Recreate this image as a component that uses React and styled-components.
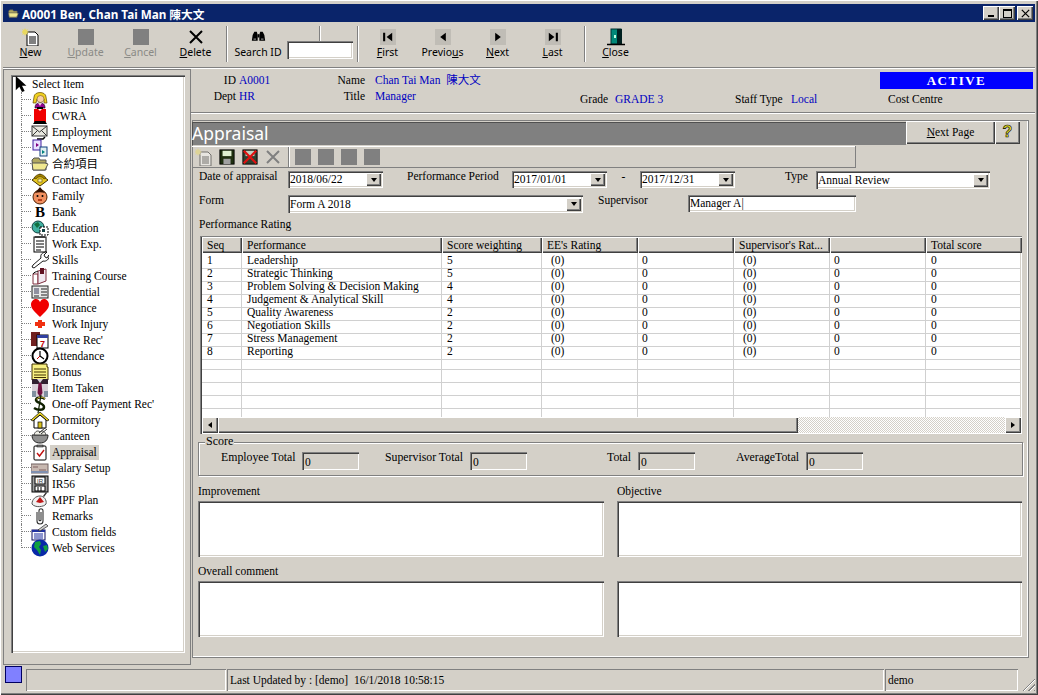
import React from "react"
import styled, { createGlobalStyle, css } from "styled-components"

const FACE = "#d4d0c8"

const GlobalStyle = createGlobalStyle`
  html, body { margin: 0; padding: 0; background: ${FACE}; }
  * { box-sizing: border-box; }
`

const raised = css`
  box-shadow: inset 1px 1px 0 #fff, inset -1px -1px 0 #404040, inset -2px -2px 0 #808080;
`
const sunken = css`
  box-shadow: inset 1px 1px 0 #808080, inset 2px 2px 0 #404040, inset -1px -1px 0 #fff, inset -2px -2px 0 ${FACE};
`
const etched = css`
  box-shadow: inset 1px 1px 0 #808080, inset -1px -1px 0 #808080, inset 2px 2px 0 #fff, 1px 1px 0 #fff;
`

const Icons = {
  pointer: <path d="M2 0v16l4-4 3 6 3-1-3-6h5z" fill="#000" />,
  person: <>
    <path d="M3 6c0-6 12-6 12 0l1 6h-3V8H6l-1 4H2z" fill="#f0d020" stroke="#604800" strokeWidth=".7" />
    <circle cx="9.500" cy="8" r="3.500" fill="#f8d0a8" stroke="#604800" strokeWidth=".5" />
    <path d="M4 17c0-4 2-5 5-5s5 1 5 5z" fill="#900090" stroke="#000" strokeWidth=".6" />
    <path d="M7 12h4l-2 3z" fill="#f0c8e0" />
  </>,
  coat: <>
    <path d="M3 2h4l2 2 2-2h4v13H3z" fill="#f00000" />
    <path d="M2 17l2-3h10l2 3z" fill="#000" />
    <rect x="6" y="0" width="6" height="2" fill="#000" />
  </>,
  mail: <>
    <rect x="1" y="3" width="15" height="10" fill="#e8e8e0" stroke="#333" />
    <path d="M1 3l7.500 6L16 3M1 13l5-5M16 13l-5-5" fill="none" stroke="#333" />
    <path d="M6 16h6l2-2" fill="none" stroke="#000" strokeWidth="1.500" />
  </>,
  movement: <>
    <rect x="2" y="1" width="8" height="10" fill="#e8e0ff" stroke="#4020a0" />
    <rect x="9" y="8" width="7" height="9" fill="#e0f0f0" stroke="#104080" />
    <path d="M5 4l3 2-3 2z" fill="#800080" />
    <path d="M11 11l3 2-3 2z" fill="#008080" />
  </>,
  folder: <>
    <path d="M1 5l2-2h5l1 2h6v10H2z" fill="#b0a860" stroke="#555" />
    <path d="M1 8h13l3 1-3 6H2z" fill="#f0e890" stroke="#555" />
  </>,
  phone: <>
    <path d="M1 9l8-6 8 6-8 6z" fill="#e8c820" stroke="#403000" />
    <path d="M3 7c3-5 9-5 12 0l-2 1c-2-3-6-3-8 0z" fill="#a08000" stroke="#403000" strokeWidth=".6" />
    <rect x="7" y="8" width="4" height="3" fill="#fff0a0" stroke="#403000" strokeWidth=".5" />
  </>,
  face: <>
    <circle cx="9" cy="10" r="7" fill="#f09060" stroke="#502000" />
    <path d="M4 6l5-6 5 6c-3-1-7-1-10 0z" fill="#301000" />
    <circle cx="6.500" cy="9" r="1" fill="#000" /><circle cx="11.500" cy="9" r="1" fill="#000" />
    <path d="M7 13h4" stroke="#a02000" strokeWidth="1.500" />
  </>,
  bank: <text x="9" y="14" textAnchor="middle" fontFamily="Liberation Serif, serif" fontWeight="700" fontSize="15" fill="#000">B</text>,
  education: <>
    <circle cx="7" cy="8" r="6" fill="#40b0a0" stroke="#104040" />
    <path d="M3 5l4-2 2 3-3 3zM9 10l3 1-2 3z" fill="#107040" />
    <rect x="9" y="8" width="8" height="8" fill="#fff" stroke="#000" strokeDasharray="2 1" />
    <rect x="11" y="10" width="3" height="3" fill="#104040" />
  </>,
  notepad: <>
    <rect x="3" y="2" width="12" height="15" fill="#fff" stroke="#000" />
    <path d="M5 1v2M7 1v2M9 1v2M11 1v2M13 1v2" stroke="#000" />
    <path d="M5 6h8M5 9h8M5 12h8M5 15h5" stroke="#000" />
  </>,
  wrench: <path d="M1 16l1-2 8-7c-1-3 1-6 6-6l-3 3 1 2 2 1 2-3c1 4-3 7-6 6l-9 7z" fill="#fff" stroke="#000" strokeWidth=".9" />,
  training: <>
    <path d="M2 7h5v10H2z" fill="#fff" stroke="#803040" />
    <path d="M7 4l8-2v12l-8 3z" fill="#f0e8f0" stroke="#803040" />
    <rect x="9" y="1" width="4" height="6" fill="#601020" />
    <path d="M2 7c1-2 3-2 5-3" fill="none" stroke="#000" />
  </>,
  card: <>
    <rect x="1" y="3" width="16" height="12" fill="#e8e8e8" stroke="#222" />
    <rect x="3" y="5" width="5" height="6" fill="#9090a0" />
    <path d="M10 6h6M10 9h6M10 12h6M3 13h5" stroke="#222" />
  </>,
  heart: <path d="M9 18C4 13 0 10 0 5.500 0 2 3 0 5 0c2 0 3 1 4 3 1-2 2-3 4-3 2 0 5 2 5 5.500C18 10 14 13 9 18z" fill="#f00000" />,
  cross: <path d="M7 5h4v2h3v4h-3v2H7v-2H4V7h3z" fill="#f03010" />,
  calendar: <>
    <rect x="0" y="1" width="9" height="14" fill="#702020" />
    <rect x="6" y="4" width="11" height="13" fill="#fff" stroke="#000" />
    <rect x="6" y="4" width="11" height="3" fill="#3040a0" />
    <text x="11.500" y="16" textAnchor="middle" fontFamily="Liberation Sans, sans-serif" fontWeight="700" fontSize="9" fill="#c00000">7</text>
  </>,
  clock: <>
    <circle cx="9" cy="9" r="7.500" fill="#fff" stroke="#000" strokeWidth="2" />
    <path d="M9 9V4M9 9l4 3" stroke="#000" strokeWidth="1.200" />
    <path d="M9 9l-3 3" stroke="#c00000" />
  </>,
  bonus: <>
    <path d="M1 1h15v3h1v13H1z" fill="#f8f080" stroke="#403000" />
    <path d="M3 6h12M3 9h12M3 12h12M3 14.500h12" stroke="#403000" />
  </>,
  tie: <>
    <rect x="1" y="0" width="16" height="18" fill="#d8d0d8" />
    <path d="M1 0h5l3 4 3-4h5v5H1z" fill="#302030" />
    <path d="M7.500 4h3l1 10-2.500 4-2.500-4z" fill="#701040" />
    <rect x="1" y="12" width="4" height="6" fill="#8090a0" /><rect x="13" y="12" width="4" height="6" fill="#8090a0" />
  </>,
  dollar: <>
    <path d="M14 4c-3-2-9-2-9 1s8 3 8 7-7 3-10 1" fill="none" stroke="#102000" strokeWidth="2.500" />
    <path d="M14 3.500c-3-2-8-1.500-8 1" fill="none" stroke="#e0c040" strokeWidth="1" />
    <path d="M10 0l-3 18" stroke="#102000" strokeWidth="1.200" />
  </>,
  house: <>
    <path d="M0 9l9-8 9 8-2 1-7-6-7 6z" fill="#f0d820" stroke="#000" strokeWidth=".7" />
    <path d="M3 9v8h12V9L9 4z" fill="#fff" stroke="#000" />
    <rect x="7" y="11" width="4" height="6" fill="#d8c020" stroke="#000" strokeWidth=".7" />
  </>,
  bowl: <>
    <path d="M1 8h16c0 5-3 8-8 8s-8-3-8-8z" fill="#909090" stroke="#222" />
    <path d="M3 8c1-4 4-5 6-3 2-2 5-1 6 3z" fill="#f0f0e8" stroke="#444" />
    <path d="M8 6l6-5M10 7l6-5" stroke="#333" />
  </>,
  check: <>
    <rect x="3" y="3" width="12" height="14" rx="1" fill="#fff" stroke="#000" />
    <rect x="6" y="2" width="6" height="2" fill="#808080" stroke="#000" strokeWidth=".5" />
    <path d="M6 10l2.500 3L13 7" fill="none" stroke="#c01010" strokeWidth="1.400" />
  </>,
  salary: <>
    <rect x="0" y="5" width="17" height="9" fill="#c8b8b0" stroke="#706060" />
    <path d="M2 8h5M8 11h7" stroke="#806060" />
    <rect x="0" y="12" width="17" height="2" fill="#8090b0" />
  </>,
  floppy: <>
    <rect x="1" y="1" width="16" height="16" fill="#a0a0a0" stroke="#000" />
    <rect x="4" y="2" width="10" height="7" fill="#fff" stroke="#000" />
    <text x="9" y="8" textAnchor="middle" fontFamily="Liberation Sans, sans-serif" fontSize="6" fill="#333">IR</text>
    <rect x="4" y="11" width="10" height="5" fill="#fff" stroke="#000" />
    <path d="M7 12v4M10 12v4" stroke="#000" />
  </>,
  mpf: <>
    <path d="M1 13c0-5 4-8 8-8s7 4 6 8c-2 3-11 4-14 0z" fill="#f0f0f0" stroke="#555" />
    <path d="M5 11l4-5 4 5-4 1z" fill="#c01818" />
    <path d="M12 5l3-4 1 1-3 4z" fill="#333" />
  </>,
  clip: <path d="M6 5v9c0 4 6 4 6 0V4c0-3-4-3-4 0v9c0 1 2 1 2 0V5" fill="none" stroke="#333" strokeWidth="1.100" />,
  fields: <>
    <rect x="1" y="7" width="13" height="10" fill="#f8f8ff" stroke="#101060" />
    <rect x="1" y="7" width="13" height="2" fill="#2030a0" />
    <path d="M3 11h9M3 13h9M3 15h9" stroke="#2030a0" />
    <path d="M7 7l8-6 2 2-8 5z" fill="#d0d0d0" stroke="#222" strokeWidth=".7" />
  </>,
  globe: <>
    <circle cx="9" cy="9" r="8.500" fill="#0828a8" />
    <path d="M4 3l5-1 1 3-2 3 2 3-1 5-3-5-3-3zM12 7l4-1 1 4-3 3z" fill="#10a040" />
  </>,
  newDoc: <>
    <path d="M5 4h8l3 3v11H5z" fill="#fff" stroke="#000" />
    <path d="M7 9h7M7 11h7M7 13h7M7 15h7" stroke="#000" />
    <path d="M3 0l1 2 2-1-1 2 2 1-2 1 1 2-2-1-1 2-1-2-2 1 1-2-2-1 2-1-1-2 2 1z" fill="#e8d860" />
  </>,
  binoculars: <>
    <path d="M2 6l2-4h3l1 4v7H1zM16 6l-2-4h-3l-1 4v7h7z" fill="#000" />
    <rect x="8" y="5" width="2" height="4" fill="#000" />
    <rect x="3" y="10" width="3" height="2" fill="#606060" /><rect x="12" y="10" width="3" height="2" fill="#606060" />
  </>,
  door: <>
    <rect x="4" y="1" width="10" height="15" fill="#008878" stroke="#003030" />
    <rect x="10" y="1" width="5" height="15" fill="#002020" />
    <rect x="7" y="7" width="2" height="3" fill="#c0ffe0" />
    <path d="M0 16.500h18" stroke="#000" strokeWidth="1.500" />
  </>,
  save: <>
    <rect x="1" y="1" width="16" height="16" fill="#203010" stroke="#000" />
    <rect x="4" y="2" width="10" height="6" fill="#e0f0d0" />
    <rect x="5" y="11" width="8" height="6" fill="#a0a0a0" />
  </>,
  saveDelete: <>
    <rect x="1" y="1" width="16" height="16" fill="#304030" stroke="#000" />
    <rect x="4" y="2" width="10" height="6" fill="#c0d0c0" />
    <path d="M2 2l14 14M16 2L2 16" stroke="#e01010" strokeWidth="2.500" />
  </>,
}

function Icon({ name, size = 18, faded }) {
  return (
    <svg width={size} height={size} viewBox="0 0 18 18" opacity={faded ? 0.45 : 1} style={{ display: "block" }}>
      {Icons[name]}
    </svg>
  )
}

const XMark = ({ color = "#000", size = 18 }) => (
  <svg width={size} height={size} viewBox="0 0 18 18" style={{ display: "block" }}>
    <path d="M3 3l12 12M15 3L3 15" stroke={color} strokeWidth="2" />
  </svg>
)

const Triangle = ({ dir, size = 8 }) => {
  const d = {
    left: "M6 1L2 4l4 3z",
    right: "M2 1l4 3-4 3z",
    down: "M1 2h6L4 6z",
    first: "M.5 1H2v6H.5zM7 1L3 4l4 3z",
    last: "M1 1l4 3-4 3zM6 1h1.500v6H6z",
  }[dir]
  return <svg width={size} height={size} viewBox="0 0 8 8" style={{ display: "block" }}><path d={d} fill="#000" /></svg>
}

const Window = styled.div`
  width: 1038px;
  height: 695px;
  padding: 4px 3px 3px;
  background: ${FACE};
  overflow: hidden;
  display: flex;
  flex-direction: column;
  font-family: "Liberation Serif", "Noto Sans CJK TC", serif;
  font-size: 11.5px;
  color: #000;
  box-shadow: inset 1px 1px 0 #fff, inset -1px -1px 0 #404040, inset -2px -2px 0 #808080;
`
const TitleBar = styled.div`
  height: 18px;
  flex: none;
  background: #0a246a;
  color: #fff;
  display: flex;
  align-items: center;
  padding: 0 2px 0 5px;
  font: 700 11.7px "Noto Sans", "Noto Sans CJK TC", sans-serif;
`
const TitleText = styled.span`
  flex: 1;
  margin-left: 3px;
`
const WinButton = styled.div`
  width: 16px;
  height: 14px;
  margin-left: ${p => p.$gap || 0}px;
  background: ${FACE};
  ${raised};
  display: flex;
  align-items: center;
  justify-content: center;
`
const MinGlyph = styled.i`
  width: 6px;
  height: 2px;
  background: #000;
  margin-top: 6px;
`
const MaxGlyph = styled.i`
  width: 9px;
  height: 9px;
  border: 1px solid #000;
  border-top-width: 2px;
`
const ToolBar = styled.div`
  height: 46px;
  flex: none;
  display: flex;
  border-bottom: 1px solid #808080;
  box-shadow: 0 1px 0 #fff;
`
const ToolButton = styled.div`
  width: ${p => p.$w || 55}px;
  flex: none;
  padding-top: 5px;
  display: flex;
  flex-direction: column;
  align-items: center;
  font: 10.5px "Noto Sans", sans-serif;
  color: ${p => (p.$off ? "#8a8a86" : "#000")};
  u { text-decoration: underline; }
`
const ToolIcon = styled.div`
  height: 20px;
  display: flex;
  align-items: center;
  justify-content: center;
`
const ToolLabel = styled.div`
  margin-top: -2px;
  line-height: 15px;
`
const GreySquare = styled.div`
  width: 16px;
  height: 16px;
  background: #808080;
`
const NavSquare = styled.div`
  width: 16px;
  height: 16px;
  background: #c0bdb6;
  display: flex;
  align-items: center;
  justify-content: center;
  svg { transform: scale(1.4); }
`
const ToolSep = styled.div`
  width: 2px;
  height: 36px;
  flex: none;
  margin: 4px ${p => p.$r || 0}px 0 ${p => p.$l || 0}px;
  border-left: 1px solid #808080;
  border-right: 1px solid #fff;
`
const SearchBox = styled.div`
  display: flex;
  flex: none;
  width: 124px;
  position: relative;
`
const SearchTick = styled.div`
  position: absolute;
  left: 90px;
  top: 4px;
  height: 15px;
  width: 2px;
  border-left: 1px solid #808080;
  border-right: 1px solid #fff;
`
const SearchField = styled.div`
  width: 66px;
  height: 18px;
  margin-top: 19px;
  flex: none;
  background: #fff;
  ${sunken};
`
const Main = styled.div`
  flex: 1;
  display: flex;
  padding-top: 1px;
  min-height: 0;
`
const LeftPanel = styled.div`
  width: 188px;
  height: 596px;
  flex: none;
  padding: 6px 6px 0 8px;
  box-shadow: inset -1px -1px 0 #808080, inset 1px 1px 0 #808080;
`
const Tree = styled.div`
  height: 578px;
  background: #fff;
  ${sunken};
  padding: 2px 0 0 3px;
`
const RootRow = styled.div`
  height: 16px;
  display: flex;
  align-items: center;
  margin-top: -1px;
`
const RootLabel = styled.span`
  margin-left: 2px;
`
const TreeRow = styled.div`
  height: 16px;
  display: flex;
  align-items: center;
  padding-left: 7px;
`
const Connector = styled.div`
  width: 10px;
  height: ${p => (p.$last ? 8 : 16)}px;
  flex: none;
  align-self: flex-start;
  border-left: 1px dotted #808080;
  position: relative;
  &::after {
    content: "";
    position: absolute;
    left: 0;
    top: 7px;
    width: 9px;
    border-top: 1px dotted #808080;
  }
`
const TreeIcon = styled.div`
  width: 18px;
  flex: none;
`
const TreeLabel = styled.span`
  margin-left: ${p => (p.$selected ? 1 : 3)}px;
  padding: 0 ${p => (p.$selected ? 2 : 0)}px;
  line-height: 15px;
  background: ${p => (p.$selected ? FACE : "transparent")};
  white-space: nowrap;
`
const RightSide = styled.div`
  flex: 1;
  min-width: 0;
`
const Header = styled.div`
  height: 44px;
  display: flex;
  padding-top: 3px;
  border-bottom: 1px solid #808080;
  box-shadow: 0 1px 0 #fff;
  margin-bottom: 7px;
`
const InfoCol = styled.div`
  width: ${p => p.$w}px;
  flex: none;
  padding-top: ${p => p.$top || 0}px;
`
const InfoRow = styled.div`
  display: flex;
  height: 16px;
  line-height: 16px;
`
const InfoLabel = styled.span`
  width: ${p => p.$w}px;
  flex: none;
  text-align: ${p => p.$align || "right"};
  margin-right: ${p => p.$gap ?? 3}px;
`
const InfoValue = styled.span`
  color: #0000c0;
  white-space: nowrap;
`
const ActiveBadge = styled.div`
  width: 153px;
  height: 17px;
  background: #0000ff;
  color: #fff;
  font-weight: 700;
  font-size: 13px;
  letter-spacing: 1.5px;
  text-align: center;
  line-height: 17px;
`
const CostCentre = styled.div`
  padding: 2px 0 0 8px;
  line-height: 16px;
`
const Panel = styled.div`
  width: 837px;
  height: 538px;
  margin-left: 1px;
  padding-top: 2px;
  box-shadow: inset 1px 1px 0 #808080, inset -1px -1px 0 #808080, inset -2px -2px 0 #fff;
`
const PanelHead = styled.div`
  display: flex;
  height: 23px;
`
const PanelTitle = styled.div`
  width: 714px;
  background: #808080;
  color: #fff;
  font: 17.5px/22px "Noto Sans", sans-serif;
  box-shadow: inset 1px 1px 0 #505050;
`
const HeadButton = styled.div`
  width: ${p => p.$w}px;
  height: 23px;
  margin-top: -1px;
  padding-bottom: 1px;
  background: ${FACE};
  ${raised};
  display: flex;
  align-items: center;
  justify-content: center;
  u { text-decoration: underline; }
`
const HelpMark = styled.span`
  font: 700 16px "Liberation Sans", sans-serif;
  color: #e8e020;
  -webkit-text-stroke: .6px #000;
`
const FormBar = styled.div`
  width: 664px;
  height: 22px;
  margin-top: 1px;
  display: flex;
  align-items: center;
  box-shadow: inset -1px -1px 0 #808080, inset 0 1px 0 #fff;
`
const BarSlot = styled.div`
  width: 23px;
  display: flex;
  justify-content: center;
`
const BarSep = styled.div`
  width: 2px;
  height: 20px;
  margin: 0 5px 0 4px;
  border-left: 1px solid #808080;
  border-right: 1px solid #fff;
`
const SquareRow = styled.div`
  display: flex;
  gap: 7px;
`
const FormRow = styled.div`
  display: flex;
  align-items: flex-start;
  height: ${p => p.$h}px;
  padding-left: 7px;
`
const FieldLabel = styled.div`
  width: ${p => p.$w}px;
  margin-left: ${p => p.$ml || 0}px;
  flex: none;
  line-height: 16px;
  white-space: nowrap;
  text-align: ${p => p.$align || "left"};
`
const Combo = styled.div`
  width: ${p => p.$w}px;
  height: ${p => p.$h || 17}px;
  margin-top: 3px;
  flex: none;
  background: #fff;
  ${sunken};
  display: flex;
  align-items: center;
  justify-content: space-between;
  padding: 1px 2px 2px 2px;
  line-height: 14px;
`
const ComboArrow = styled.div`
  width: 15px;
  height: 13px;
  margin-top: 1px;
  background: ${FACE};
  ${raised};
  display: flex;
  align-items: center;
  justify-content: center;
`
const Grid = styled.div`
  width: 822px;
  height: 198px;
  margin-left: 8px;
  background: #fff;
  ${sunken};
  padding: 1px 1px 1px 2px;
  display: flex;
  flex-direction: column;
`
const GridBody = styled.div`
  flex: 1;
  min-height: 0;
  overflow: hidden;
`
const GridRow = styled.div`
  display: grid;
  grid-template-columns: 40px 200px 100px 96px 96px 96px 96px 96px;
  height: ${p => (p.$head ? 16 : 13)}px;
`
const HeadCell = styled.div`
  background: ${FACE};
  ${raised};
  padding-left: 5px;
  line-height: 17px;
  white-space: nowrap;
  overflow: hidden;
`
const Cell = styled.div`
  border-right: 1px solid #d0d0d0;
  border-bottom: 1px solid #d0d0d0;
  padding-left: ${p => p.$pad || 5}px;
  line-height: 15px;
  white-space: nowrap;
`
const HScroll = styled.div`
  height: 16px;
  flex: none;
  display: flex;
`
const ScrollBtn = styled.div`
  width: 16px;
  flex: none;
  background: ${FACE};
  ${raised};
  display: flex;
  align-items: center;
  justify-content: center;
`
const ScrollThumb = styled.div`
  width: 580px;
  flex: none;
  background: ${FACE};
  ${raised};
`
const ScrollTrack = styled.div`
  flex: 1;
  background: repeating-conic-gradient(#d4d0c8 0 25%, #fff 0 50%) 0 0 / 2px 2px;
`
const ScoreGroup = styled.div`
  width: 825px;
  height: 34px;
  margin: 8px 0 0 6px;
  display: flex;
  align-items: flex-start;
  position: relative;
  ${etched};
`
const ScoreLegend = styled.span`
  position: absolute;
  left: 7px;
  top: -7px;
  padding: 0 1px;
  line-height: 13px;
  font-size: 12px;
  background: ${FACE};
`
const ScoreLabel = styled.div`
  margin-left: ${p => p.$ml}px;
  width: ${p => p.$w}px;
  flex: none;
  padding-top: 7px;
  line-height: 16px;
  font-size: 11.8px;
  white-space: nowrap;
`
const ReadOnly = styled.div`
  width: 57px;
  height: 18px;
  margin-top: 10px;
  flex: none;
  ${sunken};
  padding: 3px 0 0 3px;
  line-height: 14px;
`
const NotesRow = styled.div`
  display: flex;
  gap: 13px;
  margin: ${p => p.$mt}px 0 0 6px;
`
const NotesCol = styled.div`
  width: ${p => p.$w}px;
`
const NotesLabel = styled.div`
  height: 17px;
  line-height: 14px;
`
const NotesBox = styled.div`
  height: 56px;
  background: #fff;
  ${sunken};
`
const StatusBar = styled.div`
  height: 26px;
  flex: none;
  display: flex;
  align-items: flex-start;
  padding-left: 2px;
`
const StatusLight = styled.div`
  width: 17px;
  height: 17px;
  background: #8080ff;
  border: 1px solid #000060;
  flex: none;
  margin-right: 4px;
`
const StatusPane = styled.div`
  width: ${p => p.$w}px;
  height: 22px;
  margin: 3px 1px 0 0;
  flex: none;
  padding-left: 3px;
  line-height: 22px;
  box-shadow: inset 1px 1px 0 #808080, inset -1px -1px 0 #fff;
`
const Grip = styled.div`
  width: 14px;
  height: 14px;
  margin: 11px 0 0 3px;
  background: repeating-linear-gradient(135deg, transparent 0 2px, #808080 2px 3px, #fff 3px 4px);
  clip-path: polygon(100% 0, 100% 100%, 0 100%);
`

const treeItems = [
  ["person", "Basic Info"], ["coat", "CWRA"], ["mail", "Employment"], ["movement", "Movement"],
  ["folder", "合約項目"], ["phone", "Contact Info."], ["face", "Family"], ["bank", "Bank"],
  ["education", "Education"], ["notepad", "Work Exp."], ["wrench", "Skills"], ["training", "Training Course"],
  ["card", "Credential"], ["heart", "Insurance"], ["cross", "Work Injury"], ["calendar", "Leave Rec'"],
  ["clock", "Attendance"], ["bonus", "Bonus"], ["tie", "Item Taken"], ["dollar", "One-off Payment Rec'"],
  ["house", "Dormitory"], ["bowl", "Canteen"], ["check", "Appraisal"], ["salary", "Salary Setup"],
  ["floppy", "IR56"], ["mpf", "MPF Plan"], ["clip", "Remarks"], ["fields", "Custom fields"], ["globe", "Web Services"],
]

const ratings = [
  ["1", "Leadership", "5"], ["2", "Strategic Thinking", "5"], ["3", "Problem Solving & Decision Making", "4"],
  ["4", "Judgement & Analytical Skill", "4"], ["5", "Quality Awareness", "2"], ["6", "Negotiation Skills", "2"],
  ["7", "Stress Management", "2"], ["8", "Reporting", "2"],
]

const columns = ["Seq", "Performance", "Score weighting", "EE's Rating", "", "Supervisor's Rat...", "", "Total score"]

function ComboBox({ w, h, value }) {
  return (
    <Combo $w={w} $h={h}>
      <span>{value}</span>
      <ComboArrow><Triangle dir="down" /></ComboArrow>
    </Combo>
  )
}

export default function App() {
  return (
    <Window>
      <GlobalStyle />
      <TitleBar>
        <Icon name="folder" size={11} />
        <TitleText>A0001 Ben, Chan Tai Man 陳大文</TitleText>
        <WinButton><MinGlyph /></WinButton>
        <WinButton><MaxGlyph /></WinButton>
        <WinButton $gap={2}><XMark size={11} /></WinButton>
      </TitleBar>

      <ToolBar>
        <ToolButton><ToolIcon><Icon name="newDoc" /></ToolIcon><ToolLabel><u>N</u>ew</ToolLabel></ToolButton>
        <ToolButton $off><ToolIcon><GreySquare /></ToolIcon><ToolLabel><u>U</u>pdate</ToolLabel></ToolButton>
        <ToolButton $off><ToolIcon><GreySquare /></ToolIcon><ToolLabel><u>C</u>ancel</ToolLabel></ToolButton>
        <ToolButton><ToolIcon><XMark /></ToolIcon><ToolLabel><u>D</u>elete</ToolLabel></ToolButton>
        <ToolSep $l={3} $r={1} />
        <SearchBox>
          <ToolButton $w={58}><ToolIcon><Icon name="binoculars" size={15} /></ToolIcon><ToolLabel>Search ID</ToolLabel></ToolButton>
          <SearchField />
          <SearchTick />
        </SearchBox>
        <ToolSep $l={4} $r={1} />
        <ToolButton><ToolIcon><NavSquare><Triangle dir="first" /></NavSquare></ToolIcon><ToolLabel><u>F</u>irst</ToolLabel></ToolButton>
        <ToolButton><ToolIcon><NavSquare><Triangle dir="left" /></NavSquare></ToolIcon><ToolLabel>Previo<u>u</u>s</ToolLabel></ToolButton>
        <ToolButton><ToolIcon><NavSquare><Triangle dir="right" /></NavSquare></ToolIcon><ToolLabel><u>N</u>ext</ToolLabel></ToolButton>
        <ToolButton><ToolIcon><NavSquare><Triangle dir="last" /></NavSquare></ToolIcon><ToolLabel><u>L</u>ast</ToolLabel></ToolButton>
        <ToolSep $l={4} $r={2} />
        <ToolButton><ToolIcon><Icon name="door" /></ToolIcon><ToolLabel><u>C</u>lose</ToolLabel></ToolButton>
      </ToolBar>

      <Main>
        <LeftPanel>
          <Tree>
            <RootRow>
              <Icon name="pointer" size={16} />
              <RootLabel>Select Item</RootLabel>
            </RootRow>
            {treeItems.map(([icon, label], i) => (
              <TreeRow key={label}>
                <Connector $last={i === treeItems.length - 1} />
                <TreeIcon><Icon name={icon} /></TreeIcon>
                <TreeLabel $selected={label === "Appraisal"}>{label}</TreeLabel>
              </TreeRow>
            ))}
          </Tree>
        </LeftPanel>

        <RightSide>
          <Header>
            <InfoCol $w={109}>
              <InfoRow><InfoLabel $w={45}>ID</InfoLabel><InfoValue>A0001</InfoValue></InfoRow>
              <InfoRow><InfoLabel $w={45}>Dept</InfoLabel><InfoValue>HR</InfoValue></InfoRow>
            </InfoCol>
            <InfoCol $w={280}>
              <InfoRow><InfoLabel $w={65} $gap={10}>Name</InfoLabel><InfoValue>Chan Tai Man&nbsp; 陳大文</InfoValue></InfoRow>
              <InfoRow><InfoLabel $w={65} $gap={10}>Title</InfoLabel><InfoValue>Manager</InfoValue></InfoRow>
            </InfoCol>
            <InfoCol $w={155} $top={19}>
              <InfoRow><InfoLabel $w={35} $align="left" $gap={0}>Grade</InfoLabel><InfoValue>GRADE 3</InfoValue></InfoRow>
            </InfoCol>
            <InfoCol $w={145} $top={19}>
              <InfoRow><InfoLabel $w={56} $align="left" $gap={0}>Staff Type</InfoLabel><InfoValue>Local</InfoValue></InfoRow>
            </InfoCol>
            <InfoCol $w={153}>
              <ActiveBadge>ACTIVE</ActiveBadge>
              <CostCentre>Cost Centre</CostCentre>
            </InfoCol>
          </Header>

          <Panel>
            <PanelHead>
              <PanelTitle>Appraisal</PanelTitle>
              <HeadButton $w={89}><span><u>N</u>ext Page</span></HeadButton>
              <HeadButton $w={25}><HelpMark>?</HelpMark></HeadButton>
            </PanelHead>

            <FormBar>
              <BarSlot><Icon name="newDoc" faded /></BarSlot>
              <BarSlot><Icon name="save" size={16} /></BarSlot>
              <BarSlot><Icon name="saveDelete" size={16} /></BarSlot>
              <BarSlot><XMark color="#808080" /></BarSlot>
              <BarSep />
              <SquareRow>
                <GreySquare /><GreySquare /><GreySquare /><GreySquare />
              </SquareRow>
            </FormBar>

            <FormRow $h={24}>
              <FieldLabel $w={89}>Date of appraisal</FieldLabel>
              <ComboBox w={95} value="2018/06/22" />
              <FieldLabel $w={105} $ml={24}>Performance Period</FieldLabel>
              <ComboBox w={95} value="2017/01/01" />
              <FieldLabel $w={33} $align="center">-</FieldLabel>
              <ComboBox w={95} value="2017/12/31" />
              <FieldLabel $w={31} $ml={50}>Type</FieldLabel>
              <ComboBox w={174} h={18} value="Annual Review" />
            </FormRow>
            <FormRow $h={24}>
              <FieldLabel $w={89}>Form</FieldLabel>
              <ComboBox w={295} h={18} value="Form A 2018" />
              <FieldLabel $w={90} $ml={15}>Supervisor</FieldLabel>
              <Combo $w={168}>Manager A|</Combo>
            </FormRow>
            <FormRow $h={20}>
              <FieldLabel $w={200}>Performance Rating</FieldLabel>
            </FormRow>

            <Grid>
              <GridRow $head>
                {columns.map((c, i) => <HeadCell key={i}>{c}</HeadCell>)}
              </GridRow>
              <GridBody>
                {Array.from({ length: 14 }, (_, i) => {
                  const r = ratings[i]
                  return (
                    <GridRow key={i}>
                      <Cell>{r && r[0]}</Cell>
                      <Cell>{r && r[1]}</Cell>
                      <Cell>{r && r[2]}</Cell>
                      <Cell $pad={9}>{r && "(0)"}</Cell>
                      <Cell $pad={4}>{r && "0"}</Cell>
                      <Cell $pad={9}>{r && "(0)"}</Cell>
                      <Cell $pad={4}>{r && "0"}</Cell>
                      <Cell>{r && "0"}</Cell>
                    </GridRow>
                  )
                })}
              </GridBody>
              <HScroll>
                <ScrollBtn><Triangle dir="left" /></ScrollBtn>
                <ScrollThumb />
                <ScrollTrack />
                <ScrollBtn><Triangle dir="right" /></ScrollBtn>
              </HScroll>
            </Grid>

            <ScoreGroup>
              <ScoreLegend>Score</ScoreLegend>
              <ScoreLabel $ml={23} $w={81}>Employee Total</ScoreLabel>
              <ReadOnly>0</ReadOnly>
              <ScoreLabel $ml={26} $w={85}>Supervisor Total</ScoreLabel>
              <ReadOnly>0</ReadOnly>
              <ScoreLabel $ml={80} $w={31}>Total</ScoreLabel>
              <ReadOnly>0</ReadOnly>
              <ScoreLabel $ml={41} $w={70}>AverageTotal</ScoreLabel>
              <ReadOnly>0</ReadOnly>
            </ScoreGroup>

            <NotesRow $mt={8}>
              <NotesCol $w={406}><NotesLabel>Improvement</NotesLabel><NotesBox /></NotesCol>
              <NotesCol $w={405}><NotesLabel>Objective</NotesLabel><NotesBox /></NotesCol>
            </NotesRow>
            <NotesRow $mt={7}>
              <NotesCol $w={406}><NotesLabel>Overall comment</NotesLabel><NotesBox /></NotesCol>
              <NotesCol $w={405}><NotesLabel /><NotesBox /></NotesCol>
            </NotesRow>
          </Panel>
        </RightSide>
      </Main>

      <StatusBar>
        <StatusLight />
        <StatusPane $w={200} />
        <StatusPane $w={657}>Last Updated by : [demo]&nbsp; 16/1/2018 10:58:15</StatusPane>
        <StatusPane $w={133}>demo</StatusPane>
        <Grip />
      </StatusBar>
    </Window>
  )
}
